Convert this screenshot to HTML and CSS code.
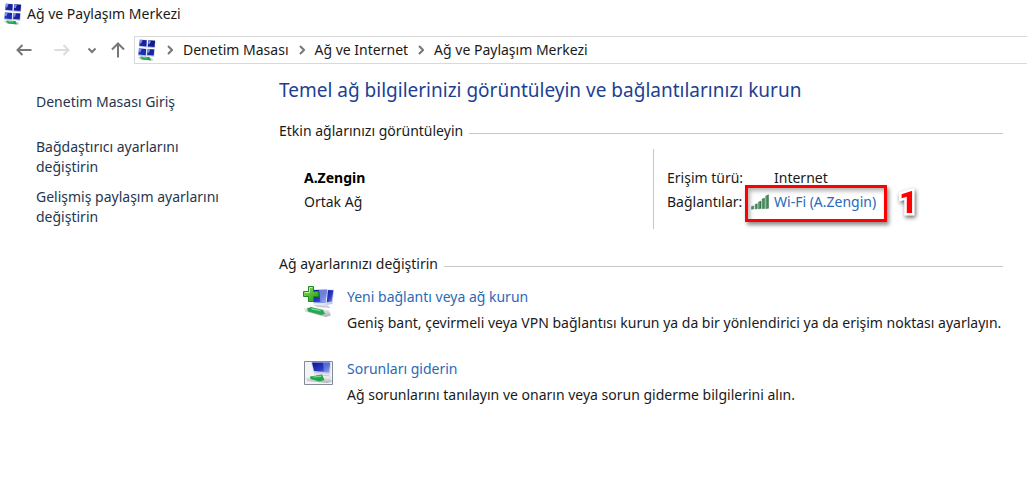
FILE: index.html
```
<!DOCTYPE html>
<html lang="tr">
<head>
  <meta charset="UTF-8">
  <title>Ağ ve Paylaşım Merkezi</title>
  <link rel="stylesheet" href="styles.css">
</head>
<body>
  <svg class="sprite" aria-hidden="true">
    <defs>
      <linearGradient id="screen" x1="0" y1="0" x2="1" y2="1">
        <stop offset="0" stop-color="#10128c"/>
        <stop offset="0.6" stop-color="#2a3cc8"/>
        <stop offset="1" stop-color="#8fa6f0"/>
      </linearGradient>
      <linearGradient id="tile" x1="1" y1="0" x2="0" y2="1">
        <stop offset="0" stop-color="#10127e"/>
        <stop offset="1" stop-color="#2434c4"/>
      </linearGradient>
      <linearGradient id="bar" x1="0" y1="0" x2="1" y2="0">
        <stop offset="0" stop-color="#6fb183"/>
        <stop offset="1" stop-color="#2c6b41"/>
      </linearGradient>
      <linearGradient id="plus" x1="0" y1="0" x2="1" y2="1">
        <stop offset="0" stop-color="#8be05a"/>
        <stop offset="1" stop-color="#1f9a1c"/>
      </linearGradient>
      <linearGradient id="pipe" x1="0" y1="0" x2="0" y2="1">
        <stop offset="0" stop-color="#ffffff"/>
        <stop offset="1" stop-color="#aab0b6"/>
      </linearGradient>
    </defs>
    <symbol id="network" viewBox="0 0 20 22">
      <path d="M2.500.5l7.500.5-.3 7.500-8-.9zM11 1l7.500.6-.5 7.600-7.800-.8zM1.500 9.200l8 .6-.4 7.600-8.300-1zM10.200 9.800l7.600.5-.6 7.500-7.600-.7z" fill="#b9c5ea"/>
      <path d="M3 .8l6.700.4-.3 6.200-7-.7zM11.500 1.300l6.600.5-.6 6.300-6.700-.6zM2.200 9.500l6.900.4-.3 6.300-7.300-.8zM10.800 10l6.400.4-.5 6.100-6.600-.5z" fill="url(#tile)"/>
      <path d="M3 .9l2.600.2-1.400 3.400-1.600-.2zM11.600 1.400l2.500.2-1.400 3.500-1.500-.2zM2.200 9.600l2.600.2-1.400 3.400-1.500-.2zM10.800 10.100l2.500.2-1.400 3.400-1.500-.2z" fill="#7e90e2"/>
      <path d="M.5 18l14.500 1.200 1.500 2.300-13-.9z" fill="#c3cbc5"/>
      <path d="M3 17.400l9.500.6 1.500 3.500-9-1z" fill="#20a052"/>
      <path d="M5 18.200l5 .4.600.8-4.800-.5z" fill="#82d99a"/>
    </symbol>
  </svg>

  <header class="titlebar">
    <svg class="app-icon"><use href="#network"/></svg>
    <span>Ağ ve Paylaşım Merkezi</span>
  </header>

  <nav class="toolbar">
    <div class="nav-buttons">
      <button type="button" class="nav-btn" aria-label="Geri">
        <svg width="16" height="14" viewBox="0 0 16 14"><path d="M15.500 7H1.500M6.500 2L1.500 7l5 5"/></svg>
      </button>
      <button type="button" class="nav-btn disabled" aria-label="İleri" disabled>
        <svg width="16" height="14" viewBox="0 0 16 14"><path d="M.5 7h14M9.500 2l5 5-5 5"/></svg>
      </button>
      <button type="button" class="nav-btn small" aria-label="Son konumlar">
        <svg width="10" height="8" viewBox="0 0 10 8"><path d="M1.500 2.500L5 6l3.500-3.500"/></svg>
      </button>
      <button type="button" class="nav-btn" aria-label="Yukarı">
        <svg width="14" height="16" viewBox="0 0 14 16"><path d="M7 15.500V1.500M1 7.500l6-6 6 6"/></svg>
      </button>
    </div>
    <div class="address">
      <svg class="app-icon"><use href="#network"/></svg>
      <svg class="chevron" viewBox="0 0 6 10"><path d="M1 1l4 4-4 4"/></svg>
      <a href="#">Denetim Masası</a>
      <svg class="chevron" viewBox="0 0 6 10"><path d="M1 1l4 4-4 4"/></svg>
      <a href="#">Ağ ve Internet</a>
      <svg class="chevron" viewBox="0 0 6 10"><path d="M1 1l4 4-4 4"/></svg>
      <a href="#">Ağ ve Paylaşım Merkezi</a>
    </div>
  </nav>

  <div class="content">
    <aside class="sidebar">
      <a class="home" href="#">Denetim Masası Giriş</a>
      <a href="#">Bağdaştırıcı ayarlarını değiştirin</a>
      <a href="#">Gelişmiş paylaşım ayarlarını değiştirin</a>
    </aside>

    <main class="main">
      <h1>Temel ağ bilgilerinizi görüntüleyin ve bağlantılarınızı kurun</h1>

      <h2>Etkin ağlarınızı görüntüleyin</h2>
      <div class="network">
        <div class="network-name">
          <strong>A.Zengin</strong>
          <span>Ortak Ağ</span>
        </div>
        <dl class="network-info">
          <dt>Erişim türü:</dt>
          <dd>Internet</dd>
          <dt>Bağlantılar:</dt>
          <dd class="marked">
            <svg class="signal" viewBox="0 0 18 16">
              <g fill="url(#bar)" stroke="#3d7a50" stroke-width="0.500">
                <path d="M.5 12.500l2-.6v3l-2 .3z"/>
                <path d="M4 10.500l2.300-.8v5l-2.300.3z"/>
                <path d="M7.500 8l2.500-.9v7.500l-2.500.3z"/>
                <path d="M11 5l2.500-1v10.500l-2.500.3z"/>
                <path d="M14.700 2l2.800-1.200v13.500l-2.800.4z"/>
              </g>
            </svg>
            <a href="#">Wi-Fi (A.Zengin)</a>
            <span class="frame"></span>
            <span class="step">1</span>
          </dd>
        </dl>
      </div>

      <h2>Ağ ayarlarınızı değiştirin</h2>
      <div class="task">
        <svg class="task-icon" viewBox="0 0 32 32">
          <path d="M21 3.500l10 .2-1.500 14.300-8 1.500z" fill="#c5cbe6"/>
          <path d="M22 4l8.300.3-1.500 11.200-6.500 1z" fill="url(#screen)"/>
          <path d="M8 3.500l17-.5-1.500 16-13-.5z" fill="#dde3f5"/>
          <path d="M9 4l15-.3-1.500 13.300-12-.8z" fill="url(#screen)"/>
          <path d="M16 4l8-.2-1.500 13-5-.3z" fill="#9db2ee" opacity="0.600"/>
          <path d="M10 19l15 .5 2.500 2.500-13-1z" fill="#c8ccd2"/>
          <path d="M1 22l5-2 20 4.500 2 5-5 1.500L2 25.500z" fill="url(#pipe)"/>
          <path d="M4 22.500l4-1.500 12 3 2 4-4 1-13-3.500z" fill="#27a750"/>
          <path d="M8 22l9 2 1 1.300-9-1.800z" fill="#8be0a0"/>
          <path d="M5.500.5h5v5h5v5h-5v5h-5v-5h-5v-5h5z" fill="url(#plus)" stroke="#218a22"/>
          <path d="M9.500 1.500h-3v5h-5" fill="none" stroke="#b9f295"/>
        </svg>
        <div>
          <a href="#">Yeni bağlantı veya ağ kurun</a>
          <p>Geniş bant, çevirmeli veya VPN bağlantısı kurun ya da bir yönlendirici ya da erişim noktası ayarlayın.</p>
        </div>
      </div>
      <div class="task">
        <svg class="task-icon" viewBox="0 0 32 32">
          <path d="M1.500 3.500h28v23h-28z" fill="#f1f3f6" stroke="#858b92"/>
          <path d="M8 4l20 .5-1 12-16-1z" fill="#ccd4ec"/>
          <path d="M9 4.500h18l-1 10-15-1.500z" fill="url(#screen)"/>
          <path d="M20 4.500h7l-1 10-5-.6z" fill="#8fa3e8" opacity="0.500"/>
          <path d="M13 16.500l13 .5 2 2.500-12-1z" fill="#c9ced6"/>
          <path d="M3 19.500l5-2 19 1 2 5-4.500 1.500L4 23z" fill="url(#pipe)"/>
          <path d="M7 18.500l12-2 2.500 5.500-5 1.500-9-2.500z" fill="#1fa34b"/>
          <path d="M9 18.700l9-1.200.5 1.500-8 .5z" fill="#7fd996"/>
        </svg>
        <div>
          <a href="#">Sorunları giderin</a>
          <p>Ağ sorunlarını tanılayın ve onarın veya sorun giderme bilgilerini alın.</p>
        </div>
      </div>
    </main>
  </div>
</body>
</html>
```
FILE: styles.css
```
:root {
  --text-color: #1a1a1a;
  --link-color: #2a6ab8;
  --side-link: #26364f;
  --heading-color: #1c3f94;
  --line-color: #c8c8c8;
}

* {
  margin: 0;
  padding: 0;
  box-sizing: border-box;
}

body {
  min-height: 100vh;
  background: #fff;
  color: var(--text-color);
  font: 14px/20px "Noto Sans", "Segoe UI", sans-serif;
}

a {
  color: var(--link-color);
  text-decoration: none;
}
a:hover {
  text-decoration: underline;
}

.sprite {
  position: absolute;
  width: 0;
  height: 0;
}

.app-icon {
  width: 20px;
  height: 22px;
  flex: none;
}

.titlebar {
  display: flex;
  align-items: center;
  gap: 4px;
  height: 28px;
  padding-left: 3px;
}

.toolbar {
  display: flex;
  margin-top: 8px;
}
.nav-buttons {
  display: flex;
  align-items: center;
  width: 134px;
  padding-left: 12px;
  flex: none;
}
.nav-btn {
  display: flex;
  align-items: center;
  justify-content: center;
  width: 24px;
  height: 28px;
  margin-right: 14px;
  border: none;
  background: none;
}
.nav-btn svg {
  fill: none;
  stroke: #777;
  stroke-width: 2;
}
.nav-btn.disabled {
  margin-right: 10px;
}
.nav-btn.disabled svg {
  stroke: #dcdcdc;
}
.nav-btn.small {
  width: 16px;
  margin-right: 6px;
}
.nav-btn:last-child {
  margin-right: 0;
}

.address {
  flex: 1;
  display: flex;
  align-items: center;
  gap: 10px;
  height: 28px;
  padding-left: 2px;
  border: 1px solid #d9d9d9;
  border-right: none;
}
.address a {
  color: var(--text-color);
}
.chevron {
  width: 6px;
  height: 10px;
  fill: none;
  stroke: #777;
  stroke-width: 2;
}

.content {
  display: flex;
}

.sidebar {
  width: 279px;
  flex: none;
  padding: 28px 56px 0 36px;
}
.sidebar a {
  display: block;
  margin-bottom: 10px;
  color: var(--side-link);
}
.sidebar .home {
  margin-bottom: 25px;
}

.main {
  flex: 1;
  padding: 12px 24px 24px 0;
}
h1 {
  font-size: 19px;
  line-height: 28px;
  font-weight: 400;
  color: var(--heading-color);
  margin-bottom: 17px;
}
h2 {
  display: flex;
  align-items: center;
  gap: 6px;
  font-size: 14px;
  font-weight: 400;
}
h2::after {
  content: "";
  flex: 1;
  margin-top: 4px;
  border-top: 1px solid var(--line-color);
}

.network {
  display: flex;
  height: 80px;
  margin: 8px 0 25px;
  line-height: 24px;
}
.network-name {
  flex: 1;
  display: flex;
  flex-direction: column;
  padding: 17px 0 0 25px;
}
.network-name strong {
  color: #000;
}
.network-info {
  width: 350px;
  display: grid;
  grid-template-columns: 107px 1fr;
  grid-auto-rows: 24px;
  padding: 17px 0 0 13px;
  border-left: 1px solid var(--line-color);
}
.marked {
  position: relative;
  display: flex;
  align-items: center;
}
.signal {
  width: 18px;
  height: 16px;
  margin: 0 5px 0 -23px;
}

/* callout drawn over the connection link */
.frame {
  position: absolute;
  left: -29px;
  top: -5px;
  width: 142px;
  height: 37px;
  border: 3px solid #fe0000;
  box-shadow: 2px 3px 4px rgba(0,0,0,0.45), inset 2px 3px 4px rgba(0,0,0,0.3);
  pointer-events: none;
}
.step {
  position: absolute;
  left: 125px;
  top: -4px;
  font: 900 32px/32px Roboto, Arial, sans-serif;
  color: #fe0000;
  -webkit-text-stroke: 5px #fff;
  paint-order: stroke fill;
  filter: drop-shadow(1px 2px 2px rgba(0,0,0,0.6));
}

.task {
  display: flex;
  gap: 12px;
  margin-bottom: 20px;
  padding-left: 24px;
  line-height: 26px;
}
h2 + .task {
  margin-top: 10px;
}
.task-icon {
  width: 32px;
  height: 32px;
  margin-top: 2px;
  flex: none;
}
```
